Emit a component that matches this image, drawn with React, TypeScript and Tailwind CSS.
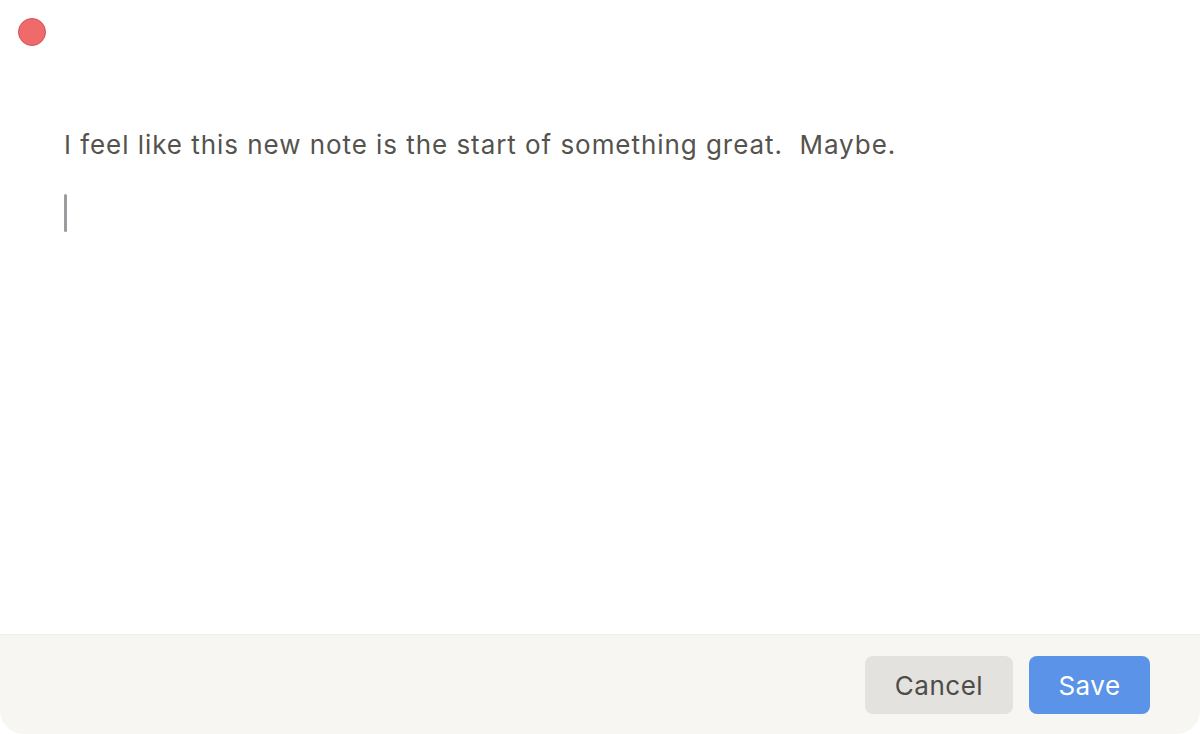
import React from "react";

export default function App() {
  return (
    <div className="w-[1200px] h-[734px] bg-white flex flex-col font-['Inter',sans-serif]">
      <div className="flex-1 flex flex-col bg-white">
        <div className="pt-[18px] pl-[18px]">
          <div className="w-[28px] h-[28px] rounded-full bg-[#ef6b6b] border border-[#dd4d4d]" />
        </div>
        <div className="pl-[64px] pt-[83px]">
          <p className="text-[26px] leading-[32px] tracking-[0.95px] text-[#55534d] whitespace-pre">I feel like this new note is the start of something great.  Maybe.</p>
          <div className="mt-[33px] w-[3px] h-[38px] rounded-full bg-[#9b9ba0]" />
        </div>
      </div>
      <div className="h-[100px] bg-[#f7f6f3] border-t border-[#ededed] rounded-b-[24px] flex items-start justify-end gap-[16px] pt-[21px] pr-[50px]">
        <button className="w-[148px] h-[58px] rounded-[8px] bg-[#e3e2df] text-[26px] tracking-[0.5px] text-[#4e4c46]">Cancel</button>
        <button className="w-[121px] h-[58px] rounded-[8px] bg-[#5b93e8] text-[26px] tracking-[0.5px] text-white">Save</button>
      </div>
    </div>
  );
}
